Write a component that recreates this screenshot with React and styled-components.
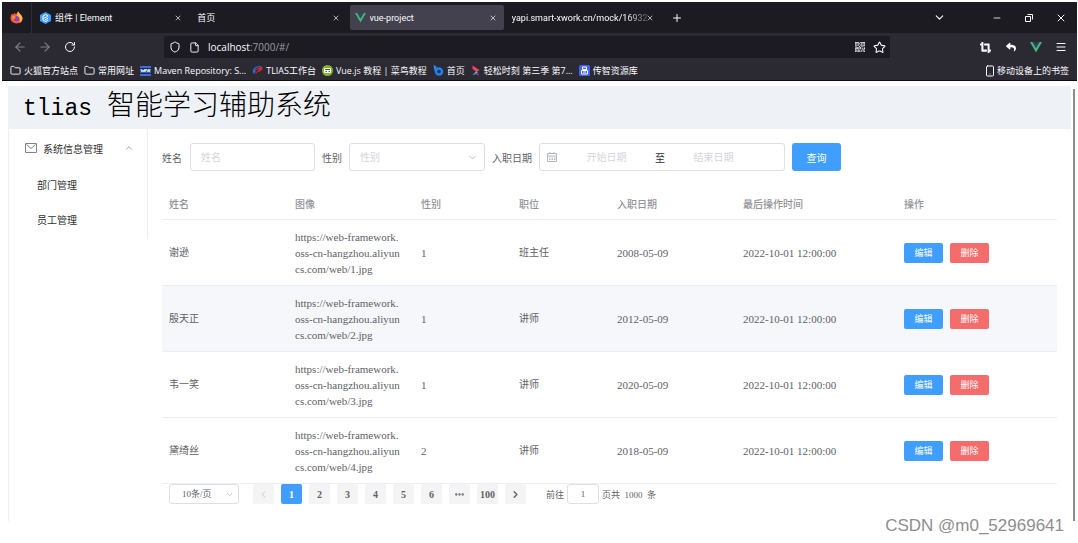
import React from "react";
import styled, { createGlobalStyle } from "styled-components";
import {
  ArrowLeft, ArrowRight, RotateCw, Shield, File, Star, Menu, ChevronDown,
  ChevronUp, ChevronLeft, ChevronRight, X, Plus, Minus, Folder, Smartphone, Ellipsis,
} from "lucide-react";
import { FaCropAlt, FaReply } from "react-icons/fa";
import { BsQrCode } from "react-icons/bs";

const sans = '"Open Sans", "Noto Sans CJK SC", sans-serif';
const serif = '"Liberation Serif", "Noto Sans CJK SC", serif';

const Global = createGlobalStyle`
  *, *::before, *::after { box-sizing: border-box; }
  body { margin: 0; background: #fff; font-family: ${serif}; font-size: 10px; color: #606266; }
  button, input, select { font: inherit; color: inherit; margin: 0; padding: 0; border: 0; background: none; }
  a { color: inherit; text-decoration: none; }
  svg { display: block; flex: none; }
`;

const Shell = styled.div`
  position: relative;
  padding: 2px 1px 0 2px;
  min-height: 100vh;
`;

/* ---------- browser frame ---------- */
const Browser = styled.header`
  background: #2b2a33;
  color: #fbfbfe;
  font-family: ${sans};
  font-size: 9px;
  border-bottom: 1px solid #0c0c0d;
`;
const TabBar = styled.div`
  display: flex;
  align-items: center;
  height: 31px;
  background: #1c1b22;
`;
const Brand = styled.div`
  display: flex;
  align-items: center;
  justify-content: center;
  width: 30px;
  height: 31px;
  border-right: 1px solid #2d2c35;
  margin-right: 3px;
`;
const Tabs = styled.div`
  display: flex;
  gap: 3px;
  flex: 0 1 626px;
  min-width: 0;
`;
const Tab = styled.div`
  display: flex;
  align-items: center;
  flex: 1 1 0;
  min-width: 0;
  height: 25px;
  padding: 0 7px 0 5px;
  border-radius: 2px;
  background: ${(p) => (p.$active ? "#42414d" : "transparent")};
`;
const TabTitle = styled.span`
  flex: 1;
  min-width: 0;
  margin-left: ${(p) => (p.$icon ? 4 : 0)}px;
  margin-right: ${(p) => (p.$fade ? -5 : 0)}px;
  overflow: hidden;
  white-space: nowrap;
  font-family: Roboto, "Noto Sans CJK SC", sans-serif;
  ${(p) => p.$fade && "mask-image: linear-gradient(90deg, #000 82%, rgba(0, 0, 0, 0.1));"}
`;
const IconButton = styled.button`
  display: flex;
  align-items: center;
  justify-content: center;
  width: ${(p) => p.$w || 12}px;
  height: 20px;
  opacity: ${(p) => (p.$dim ? 0.4 : 1)};
`;
const NewTab = styled.div`
  flex: 1;
  padding-left: 10px;
`;
const WindowControls = styled.div`
  display: flex;
  align-items: center;
`;
const NavBar = styled.div`
  display: flex;
  align-items: center;
  height: 28px;
  padding-left: 5px;
`;
const NavGroup = styled.div`
  display: flex;
  align-items: center;
  flex: none;
  width: ${(p) => p.$w}px;
  justify-content: ${(p) => (p.$end ? "flex-end" : "flex-start")};
  padding-right: ${(p) => (p.$end ? 4 : 0)}px;
`;
const UrlBar = styled.div`
  display: flex;
  align-items: center;
  gap: 8px;
  flex: 1;
  height: 22px;
  padding: 0 4px 0 5px;
  border-radius: 2px;
  background: #1c1b22;
  font-size: 10px;
`;
const UrlText = styled.span`
  flex: 1;
  color: #9a99a2;
  b { font-weight: 400; color: #fbfbfe; }
`;
const BookmarkBar = styled.nav`
  display: flex;
  align-items: center;
  height: 19px;
  padding: 0 8px;
  gap: 6px;
  white-space: nowrap;
`;
const Bookmark = styled.a`
  display: flex;
  align-items: center;
  gap: ${(p) => (p.$end ? 1 : 3)}px;
  margin-left: ${(p) => (p.$end ? "auto" : 0)};
`;

/* ---------- application ---------- */
const Viewport = styled.div`
  display: flex;
  align-items: flex-start;
  gap: 2px;
  padding: 5px 2px 0 6px;
`;
const ScrollTrack = styled.div`
  align-self: stretch;
  width: 2px;
  margin-top: 3px;
  background: #8c8c8c;
`;
const Frame = styled.div`
  flex: 1;
  min-width: 0;
  min-height: 435px;
  border-left: 1px solid #f0f0f0;
`;
const AppHeader = styled.div`
  height: 43px;
  padding-left: 14px;
  background: #eef1f6;
`;
const Title = styled.h1`
  display: flex;
  align-items: baseline;
  gap: 15px;
  margin: 0;
  color: #000;
  font: 300 28px/34px "Noto Sans CJK SC", sans-serif;
`;
const TitleLatin = styled.span`
  font: 400 23px/34px "Liberation Mono", monospace;
`;
const Body = styled.div`
  display: flex;
  align-items: flex-start;
`;
const Aside = styled.nav`
  flex: none;
  width: 139px;
  height: 110px;
  border-right: 1px solid #eee;
  color: #303133;
`;
const MenuTitle = styled.button`
  display: flex;
  align-items: center;
  gap: 6px;
  width: 100%;
  height: 38px;
  padding: 0 13px 0 16px;
  text-align: left;
  span { flex: 1; }
`;
const MenuItem = styled.a`
  display: flex;
  align-items: center;
  height: 35px;
  padding-left: 28px;
`;
const Main = styled.main`
  flex: 1;
  min-width: 0;
  padding: 14px 14px 0;
`;
const Form = styled.form`
  display: flex;
  align-items: center;
  gap: 7px;
  height: 28px;
`;
const Field = styled.div`
  display: flex;
  align-items: center;
  gap: ${(p) => p.$gap || 7}px;
  flex: none;
`;
const Box = styled.div`
  position: relative;
  display: flex;
  align-items: center;
  width: ${(p) => p.$w}px;
  height: ${(p) => p.$h || 28}px;
  border: 1px solid #dcdfe6;
  border-radius: 3px;
  background: #fff;
  color: #b4b8c0;
`;
const Input = styled.input`
  flex: 1;
  min-width: 0;
  height: 100%;
  padding: 0 ${(p) => (p.$center ? 0 : 10)}px;
  text-align: ${(p) => (p.$center ? "center" : "left")};
  color: #606266;
  outline: 0;
  &::placeholder { color: #d3d6dc; opacity: 1; }
`;
const Select = styled.select`
  appearance: none;
  width: 100%;
  height: 100%;
  padding-left: ${(p) => p.$pad}px;
  color: ${(p) => (p.$empty ? "#d3d6dc" : "#606266")};
  outline: 0;
`;
const SelectArrow = styled.span`
  position: absolute;
  right: ${(p) => p.$r}px;
  pointer-events: none;
`;
const CalendarSlot = styled.span`
  display: flex;
  justify-content: center;
  width: 14px;
  margin-left: 5px;
`;
const Separator = styled.span`
  width: 12px;
  text-align: center;
  color: #303133;
`;
const DateBox = styled(Box)`
  padding-right: 23px;
`;
const Button = styled.button`
  width: ${(p) => (p.$small ? 39 : 49)}px;
  height: ${(p) => (p.$small ? 20 : 28)}px;
  border-radius: ${(p) => (p.$small ? 2 : 3)}px;
  background: ${(p) => (p.$danger ? "#f56c6c" : "#409eff")};
  color: #fff;
  font-size: ${(p) => (p.$small ? 9 : 10)}px;
`;
const Table = styled.table`
  width: 100%;
  margin-top: 16px;
  table-layout: fixed;
  border-collapse: separate;
  border-spacing: 0;
`;
const Th = styled.th`
  width: ${(p) => (p.$w ? `${p.$w}px` : "auto")};
  height: 33px;
  padding: 0 7px;
  border-bottom: 1px solid #ebeef5;
  text-align: left;
  font-weight: 500;
  color: #909399;
`;
const Tr = styled.tr`
  background: ${(p) => (p.$hover ? "#f5f7fa" : "transparent")};
`;
const Td = styled.td`
  height: 66px;
  padding: 0 7px;
  border-bottom: 1px solid #ebeef5;
  line-height: 16px;
  font-size: ${(p) => (p.$latin ? 11 : 10)}px;
`;
const Url = styled.span`
  display: block;
  white-space: nowrap;
`;
const Actions = styled.div`
  display: flex;
  gap: 7px;
`;
const Pagination = styled.div`
  display: flex;
  align-items: center;
  height: 20px;
  padding-left: 7px;
  gap: 7px;
  font-size: 9px;
`;
const Pages = styled.div`
  display: flex;
  gap: 7px;
  margin: 0 13px 0 7px;
`;
const Page = styled.button`
  display: flex;
  align-items: center;
  justify-content: center;
  width: 21px;
  height: 20px;
  border-radius: 2px;
  background: ${(p) => (p.$active ? "#409eff" : "#f4f4f5")};
  color: ${(p) => (p.$active ? "#fff" : p.disabled ? "#c0c4cc" : "#606266")};
  font-weight: 700;
  font-size: 10px;
`;
const Total = styled.span`
  white-space: pre;
`;
const Watermark = styled.div`
  position: absolute;
  right: 14px;
  top: 516px;
  color: #8e8e8e;
  font: 17px/20px "Liberation Sans", sans-serif;
`;

/* ---------- drawings ---------- */
const Vue = ({ size = 12 }) => (
  <svg width={size} height={size} viewBox="0 0 24 24">
    <path d="M0 2h5l7 12 7-12h5L12 23z" fill="#41b883" />
    <path d="M5 2h4l3 5 3-5h4l-7 12z" fill="#35495e" />
  </svg>
);
const Firefox = () => (
  <svg width="13" height="13" viewBox="0 0 24 24">
    <path d="M3 5l3 2 2-4 3 3c2-1 2-3 4-5 1 3 7 6 8 12 0 7-5 10-11 10S1 19 1 13c0-3 1-5 2-8z" fill="#ff5a36" />
    <path d="M15 1c1 3 7 6 8 12 0 5-3 8-6 9 3-5 1-11-5-13 2-2 1-5 3-8z" fill="#ffbd2f" />
    <circle cx="12" cy="14" r="5" fill="#8a3ddb" />
    <path d="M4 10c3-2 5 0 8 1-3 0-4 2-3 4-3 1-5-2-5-5z" fill="#ff9a28" />
  </svg>
);
const ElementLogo = () => (
  <svg width="11" height="12" viewBox="0 0 22 24">
    <path d="M11 0l11 6v12l-11 6L0 18V6z" fill="#409eff" />
    <path d="M16 8l-5-3-5 3v8l5 3 5-3M7 13l8-4M10 16l6-4" fill="none" stroke="#fff" strokeWidth="2" />
  </svg>
);
const MavenLogo = () => (
  <svg width="11" height="10" viewBox="0 0 11 10">
    <path d="M0 0h11v2H0zM0 8h11v2H0z" fill="#3c6fd1" />
    <path d="M0 3h11v4H0z" fill="#2b5fc7" />
    <path d="M1 3l1 3 1-2 1 2 1-3M5 6l1-3 2 3M8 3l1 3 1-3" stroke="#dce6fa" fill="none" />
  </svg>
);
const TliasLogo = () => (
  <svg width="11" height="11" viewBox="0 0 22 22">
    <path d="M6 13C9 5 16 3 21 4c1 7-5 10-12 10l6-6c-4 0-6 2-9 5z" fill="#d9252d" />
    <path d="M3 17C-1 8 8 0 19 3 11 2 4 8 7 14z" fill="#3268c8" stroke="#3268c8" />
    <path d="M4 20l4-6 3 1c-3 1-5 3-7 5z" fill="#d9252d" />
  </svg>
);
const RunoobLogo = () => (
  <svg width="11" height="11" viewBox="0 0 22 22">
    <circle cx="11" cy="11" r="11" fill="#83b82f" />
    <rect x="4" y="6" width="14" height="10" rx="2" fill="#fff" />
    <path d="M6 9h10M7 13h3m3 0h3" stroke="#52751d" strokeWidth="2" />
  </svg>
);
const BLogo = () => (
  <svg width="11" height="11" viewBox="0 0 22 22">
    <path d="M1 0l6 3v7L3 12z" fill="#2e8cff" />
    <circle cx="12" cy="13" r="6" fill="none" stroke="#1b82f5" strokeWidth="5" />
  </svg>
);
const PlayLogo = () => (
  <svg width="10" height="11" viewBox="0 0 20 22">
    <path d="M3 1l14 9-6 4-8-6z" fill="#ff3d62" />
    <path d="M3 20l8-8 3 3-7 4z" fill="#31c5f4" />
    <path d="M10 17l7 1-5 3z" fill="#e92f5d" />
  </svg>
);
const LibraryLogo = () => (
  <svg width="11" height="11" viewBox="0 0 22 22">
    <rect width="22" height="22" rx="3" fill="#3f65f2" />
    <path d="M7 4h8v5H7zM5 11h12v7H5zM8 14h6" fill="none" stroke="#fff" strokeWidth="2" />
  </svg>
);
const Restore = () => (
  <svg width="8" height="8" viewBox="0 0 16 16" fill="none" stroke="#fbfbfe" strokeWidth="2">
    <path d="M1 5h10v10H1zM5 1h10v10" />
  </svg>
);
const Envelope = () => (
  <svg width="12" height="10" viewBox="0 0 24 20" fill="none" stroke="#80848b" strokeWidth="2">
    <path d="M1 1h22v18H1zM3 3l9 8 9-8" />
  </svg>
);
const Calendar = () => (
  <svg width="10" height="10" viewBox="0 0 20 20" fill="none" stroke="#b4b8c0" strokeWidth="2">
    <path d="M1 3h18v16H1zM1 8h18M6 0v4M14 0v4M4 12h3m2 0h3m2 0h3M4 15h3m2 0h3m2 0h3" />
  </svg>
);

const tabs = [
  { title: "组件 | Element", icon: <ElementLogo /> },
  { title: "首页" },
  { title: "vue-project", icon: <Vue size={11} />, active: true },
  { title: "yapi.smart-xwork.cn/mock/16932", fade: true },
];
const bookmarks = [
  ["火狐官方站点", <Folder size={11} />],
  ["常用网址", <Folder size={11} />],
  ["Maven Repository: S...", <MavenLogo />],
  ["TLIAS工作台", <TliasLogo />],
  ["Vue.js 教程 | 菜鸟教程", <RunoobLogo />],
  ["首页", <BLogo />],
  ["轻松时刻 第三季 第7...", <PlayLogo />],
  ["传智资源库", <LibraryLogo />],
];
const columns = [
  ["姓名", 126], ["图像", 126], ["性别", 98], ["职位", 98],
  ["入职日期", 126], ["最后操作时间", 161], ["操作"],
];
const rows = [
  { id: 1, name: "谢逊", sex: 1, job: "班主任", date: "2008-05-09" },
  { id: 2, name: "殷天正", sex: 1, job: "讲师", date: "2012-05-09", hover: true },
  { id: 3, name: "韦一笑", sex: 1, job: "讲师", date: "2020-05-09" },
  { id: 4, name: "黛绮丝", sex: 2, job: "讲师", date: "2018-05-09" },
];

export default function App() {
  return (
    <Shell>
      <Global />
      <Browser>
        <TabBar>
          <Brand><Firefox /></Brand>
          <Tabs>
            {tabs.map((t) => (
              <Tab key={t.title} $active={t.active}>
                {t.icon}
                <TabTitle $icon={Boolean(t.icon)} $fade={t.fade}>{t.title}</TabTitle>
                <IconButton $w={8} aria-label="关闭标签页"><X size={8} /></IconButton>
              </Tab>
            ))}
          </Tabs>
          <NewTab><IconButton aria-label="新标签页"><Plus size={12} /></IconButton></NewTab>
          <WindowControls>
            <IconButton $w={84} aria-label="标签列表"><ChevronDown size={13} /></IconButton>
            <IconButton $w={32} aria-label="最小化"><Minus size={10} /></IconButton>
            <IconButton $w={32} aria-label="还原"><Restore /></IconButton>
            <IconButton $w={32} aria-label="关闭"><X size={12} /></IconButton>
          </WindowControls>
        </TabBar>
        <NavBar>
          <NavGroup $w={157}>
            <IconButton $w={25} $dim aria-label="后退"><ArrowLeft size={14} /></IconButton>
            <IconButton $w={25} $dim aria-label="前进"><ArrowRight size={14} /></IconButton>
            <IconButton $w={25} aria-label="刷新"><RotateCw size={12} /></IconButton>
          </NavGroup>
          <UrlBar>
            <Shield size={12} />
            <File size={11} />
            <UrlText><b>localhost</b>:7000/#/</UrlText>
            <BsQrCode size={10} />
            <Star size={13} />
          </UrlBar>
          <NavGroup $w={187} $end>
            <IconButton $w={25} aria-label="截图"><FaCropAlt size={11} /></IconButton>
            <IconButton $w={25} aria-label="撤销"><FaReply size={10} /></IconButton>
            <IconButton $w={25} aria-label="Vue"><Vue size={12} /></IconButton>
            <IconButton $w={25} aria-label="菜单"><Menu size={12} /></IconButton>
          </NavGroup>
        </NavBar>
        <BookmarkBar>
          {bookmarks.map(([text, icon]) => (
            <Bookmark key={text} href="#">{icon}{text}</Bookmark>
          ))}
          <Bookmark href="#" $end><Smartphone size={12} />移动设备上的书签</Bookmark>
        </BookmarkBar>
      </Browser>

      <Viewport>
        <Frame>
          <AppHeader>
            <Title><TitleLatin>tlias</TitleLatin>智能学习辅助系统</Title>
          </AppHeader>
          <Body>
            <Aside>
              <MenuTitle>
                <Envelope />
                <span>系统信息管理</span>
                <ChevronUp size={10} strokeWidth={2} color="#909399" />
              </MenuTitle>
              <MenuItem href="#">部门管理</MenuItem>
              <MenuItem href="#">员工管理</MenuItem>
            </Aside>
            <Main>
              <Form onSubmit={(e) => e.preventDefault()}>
                <Field $gap={8}>
                  <label htmlFor="name">姓名</label>
                  <Box $w={125}><Input id="name" placeholder="姓名" /></Box>
                </Field>
                <Field>
                  <label htmlFor="sex">性别</label>
                  <Box $w={136}>
                    <Select id="sex" $pad={10} $empty defaultValue="">
                      <option value="">性别</option>
                    </Select>
                    <SelectArrow $r={6}><ChevronDown size={11} strokeWidth={2} /></SelectArrow>
                  </Box>
                </Field>
                <Field>
                  <label htmlFor="start">入职日期</label>
                  <DateBox $w={246}>
                    <CalendarSlot><Calendar /></CalendarSlot>
                    <Input id="start" $center placeholder="开始日期" />
                    <Separator>至</Separator>
                    <Input aria-label="结束日期" $center placeholder="结束日期" />
                  </DateBox>
                </Field>
                <Button>查询</Button>
              </Form>

              <Table>
                <thead>
                  <tr>{columns.map(([label, w]) => <Th key={label} $w={w}>{label}</Th>)}</tr>
                </thead>
                <tbody>
                  {rows.map((r) => (
                    <Tr key={r.id} $hover={r.hover}>
                      <Td>{r.name}</Td>
                      <Td $latin>
                        <Url>https://web-framework.</Url>
                        <Url>oss-cn-hangzhou.aliyun</Url>
                        <Url>cs.com/web/{r.id}.jpg</Url>
                      </Td>
                      <Td $latin>{r.sex}</Td>
                      <Td>{r.job}</Td>
                      <Td $latin>{r.date}</Td>
                      <Td $latin>2022-10-01 12:00:00</Td>
                      <Td>
                        <Actions>
                          <Button $small>编辑</Button>
                          <Button $small $danger>删除</Button>
                        </Actions>
                      </Td>
                    </Tr>
                  ))}
                </tbody>
              </Table>

              <Pagination>
                <Box $w={70} $h={20}>
                  <Select aria-label="每页条数" $pad={12} defaultValue="10">
                    <option value="10">10条/页</option>
                  </Select>
                  <SelectArrow $r={4}><ChevronDown size={9} strokeWidth={2} /></SelectArrow>
                </Box>
                <Pages>
                  <Page disabled aria-label="上一页"><ChevronLeft size={11} /></Page>
                  {["1", "2", "3", "4", "5", "6"].map((p) => (
                    <Page key={p} $active={p === "1"}>{p}</Page>
                  ))}
                  <Page aria-label="向后 5 页"><Ellipsis size={11} strokeWidth={3} /></Page>
                  <Page>100</Page>
                  <Page aria-label="下一页"><ChevronRight size={11} strokeWidth={3} /></Page>
                </Pages>
                <Field $gap={3}>
                  <label htmlFor="goto">前往</label>
                  <Box $w={32} $h={20}><Input id="goto" $center defaultValue="1" /></Box>
                  <Total>页共  1000  条</Total>
                </Field>
              </Pagination>
            </Main>
          </Body>
        </Frame>
        <ScrollTrack />
      </Viewport>
      <Watermark>CSDN @m0_52969641</Watermark>
    </Shell>
  );
}
